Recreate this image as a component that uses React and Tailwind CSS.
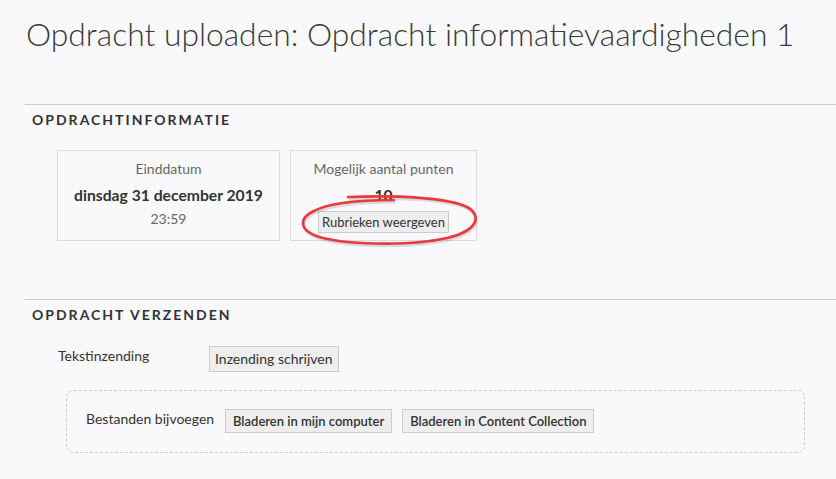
export default function App() {
  const ring =
    "M49 6 C 100 4, 150 7, 168 16 C 184 25, 178 40, 148 47 C 118 54, 58 55, 24 47 C -2 40, 0 27, 15 20 C 30 12, 60 9, 95 9";

  return (
    <div className="min-h-[479px] bg-[#f9f9fb] text-[#333] font-['Lato','Liberation_Sans',sans-serif] overflow-hidden">
      <h1 className="pl-[26px] pt-[12px] text-[31.8px] font-light leading-[44px] text-[#3a3a3a] whitespace-nowrap">
        Opdracht uploaden: Opdracht informatievaardigheden 1
      </h1>

      {/* Opdrachtinformatie */}
      <section className="ml-[25px] mt-[48px] border-t border-[#ccc]">
        <h2 className="pl-[7px] pt-[6px] text-[14px] font-bold tracking-[2px] leading-[18px] text-[#333]">
          OPDRACHTINFORMATIE
        </h2>
        <div className="flex gap-[10px] pl-[32px] pt-[21px]">
          <div className="w-[223px] h-[91px] border border-[#ddd] flex flex-col items-center pt-[9px]">
            <div className="text-[14px] leading-[18px] text-[#666]">Einddatum</div>
            <div className="mt-[8px] text-[15.7px] font-bold leading-[18px] text-[#333]">dinsdag 31 december 2019</div>
            <div className="mt-[6px] text-[14px] leading-[18px] text-[#666]">23:59</div>
          </div>
          <div className="relative w-[187px] h-[91px] border border-[#ddd] flex flex-col items-center pt-[9px]">
            <div className="text-[14px] leading-[18px] text-[#666]">Mogelijk aantal punten</div>
            <div className="mt-[8px] text-[15.7px] font-bold leading-[18px] text-[#333]">10</div>
            <button className="mt-[7px] h-[22px] px-[3px] bg-[#eee] border border-[#ccc] text-[13px] leading-[18px] text-[#333]">
              Rubrieken weergeven
            </button>
            <svg
              className="absolute left-[8px] top-[40px] pointer-events-none"
              width="184"
              height="60"
              viewBox="0 0 184 60"
            >
              <path d={ring} fill="none" stroke="rgba(0,0,0,0.12)" strokeWidth="3" transform="translate(1,2)" />
              <path d={ring} fill="none" stroke="#e8393c" strokeWidth="2.6" strokeLinecap="round" />
            </svg>
          </div>
        </div>
      </section>

      {/* Opdracht verzenden */}
      <section className="ml-[25px] mt-[58px] border-t border-[#ccc]">
        <h2 className="pl-[7px] pt-[6px] text-[14px] font-bold tracking-[2px] leading-[18px] text-[#333]">
          OPDRACHT VERZENDEN
        </h2>
        <div className="flex items-start pl-[33px] pt-[22px]">
          <div className="w-[151px] pt-[1px] text-[14px] leading-[18px] text-[#333]">Tekstinzending</div>
          <button className="h-[26px] px-[5px] bg-[#eee] border border-[#ccc] text-[14px] leading-[18px] text-[#333]">
            Inzending schrijven
          </button>
        </div>
        <div className="ml-[41px] mr-[31px] mt-[18px] h-[63px] border border-dashed border-[#ccc] rounded-[8px] flex items-start pl-[19px] pt-[18px]">
          <div className="w-[139px] pt-[1px] text-[14px] leading-[18px] text-[#333]">Bestanden bijvoegen</div>
          <button className="h-[24px] px-[7px] bg-[#eee] border border-[#ccc] text-[13px] font-semibold leading-[18px] text-[#333]">
            Bladeren in mijn computer
          </button>
          <button className="ml-[10px] h-[24px] px-[7px] bg-[#eee] border border-[#ccc] text-[13px] font-semibold leading-[18px] text-[#333]">
            Bladeren in Content Collection
          </button>
        </div>
      </section>
    </div>
  );
}
